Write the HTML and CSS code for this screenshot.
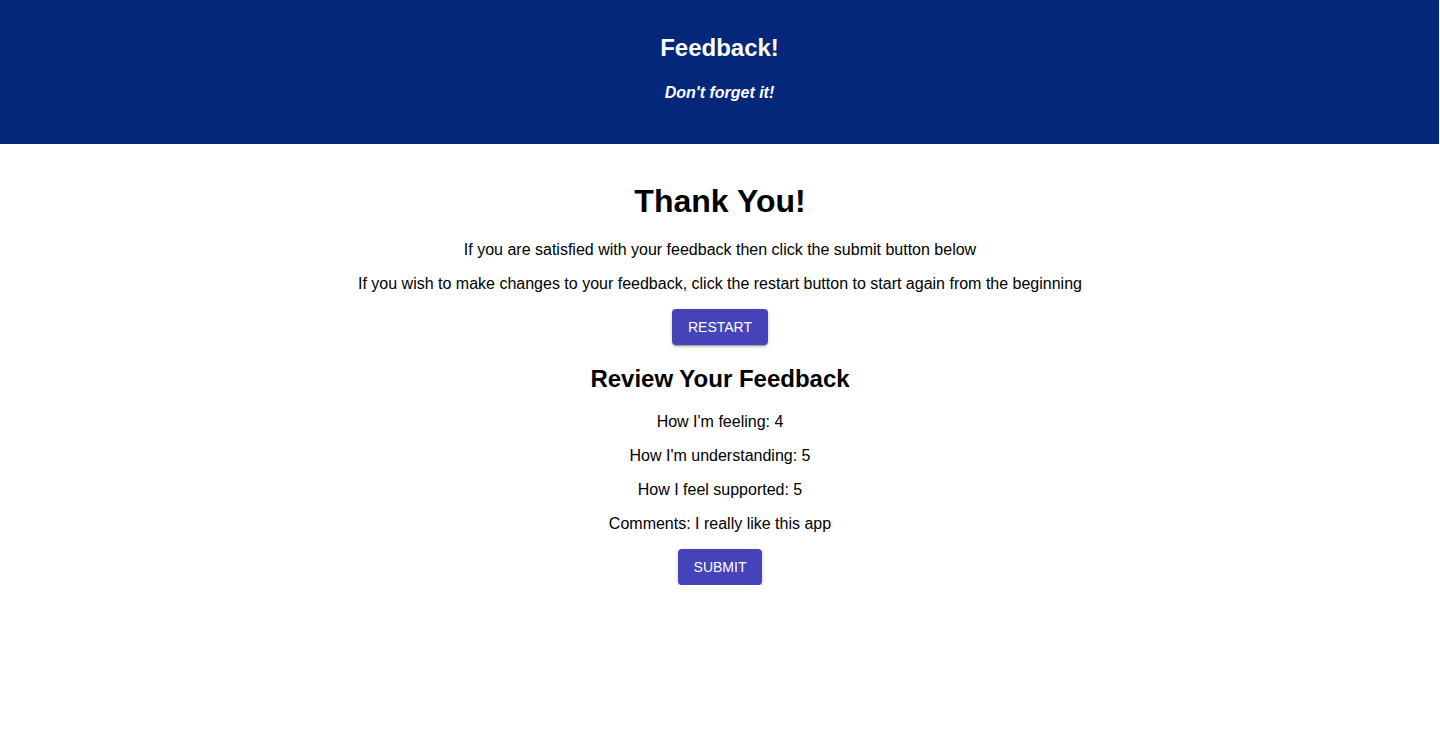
FILE: index.html
```html
<!DOCTYPE html>
<html lang="en">
<head>
<meta charset="utf-8">
<title>Feedback!</title>
<link rel="stylesheet" href="styles.css">
</head>
<body>
<header class="app-header">
  <h1 class="app-title">Feedback!</h1>
  <p class="app-subtitle">Don't forget it!</p>
</header>
<main class="content">
  <h2 class="thanks">Thank You!</h2>
  <p class="line">If you are satisfied with your feedback then click the submit button below</p>
  <p class="line">If you wish to make changes to your feedback, click the restart button to start again from the beginning</p>
  <button class="btn">Restart</button>
  <h3 class="review">Review Your Feedback</h3>
  <p class="line">How I'm feeling: 4</p>
  <p class="line">How I'm understanding: 5</p>
  <p class="line">How I feel supported: 5</p>
  <p class="line">Comments: I really like this app</p>
  <button class="btn">Submit</button>
</main>
</body>
</html>
```

FILE: styles.css
```css
html, body {
  margin: 0;
  padding: 0;
  background: #ffffff;
}

body {
  font-family: "Liberation Sans", Arial, Helvetica, sans-serif;
  color: #000000;
}

.app-header {
  width: 1439px;
  background: #042779;
  color: #ffffff;
  text-align: center;
  padding: 34px 0 42px;
  display: flex;
  flex-direction: column;
  align-items: center;
}

.app-title {
  margin: 0;
  font-size: 24px;
  line-height: 28px;
  font-weight: 700;
}

.app-subtitle {
  margin: 22px 0 0;
  font-size: 16px;
  line-height: 18px;
  font-weight: 700;
  font-style: italic;
}

.content {
  display: flex;
  flex-direction: column;
  align-items: center;
  text-align: center;
  padding-top: 39px;
}

.thanks {
  margin: 0 0 21px;
  font-size: 32px;
  line-height: 37px;
  font-weight: 700;
}

.line {
  margin: 0 0 16px;
  font-size: 16px;
  line-height: 18px;
}

.review {
  margin: 20px 0 20px;
  font-size: 24px;
  line-height: 28px;
  font-weight: 700;
}

.btn {
  box-sizing: border-box;
  height: 36px;
  padding: 0 16px;
  border: none;
  border-radius: 4px;
  background: #4443b9;
  color: #ffffff;
  font-family: "Liberation Sans", Arial, Helvetica, sans-serif;
  font-size: 14px;
  font-weight: 400;
  letter-spacing: 0;
  text-transform: uppercase;
  box-shadow: 0 3px 1px -2px rgba(0,0,0,0.2), 0 2px 2px 0 rgba(0,0,0,0.14), 0 1px 5px 0 rgba(0,0,0,0.12);
  cursor: pointer;
}
```
